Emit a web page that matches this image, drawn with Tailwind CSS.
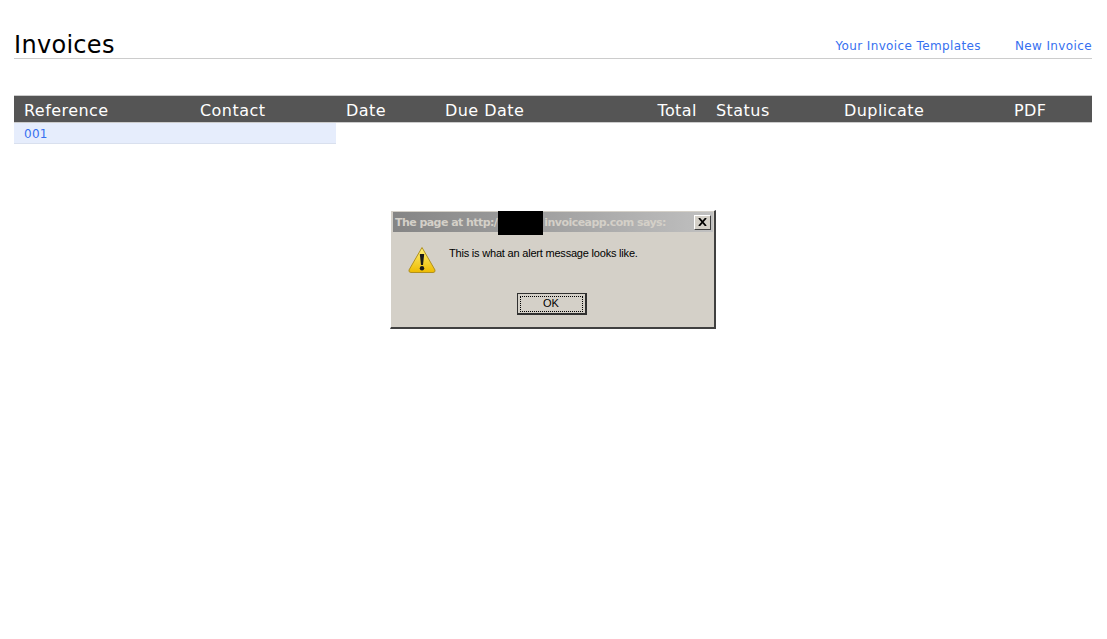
<!DOCTYPE html>
<html lang="en">
  <head>
    <meta charset="UTF-8" />
    <title>Invoices</title>
    <script src="https://cdn.jsdelivr.net/npm/@tailwindcss/browser@4"></script>
  </head>
  <body class="relative bg-white h-[639px] overflow-hidden font-['DejaVu_Sans',sans-serif]">
    <div class="pl-[14px] pr-[15px] pt-[29px]">
      <!-- Page heading -->
      <header class="flex items-end justify-between h-[30px] border-b border-[#cccccc]">
        <h1 class="text-[24px] leading-[30px] tracking-[0.3px] text-black translate-y-[2px]">Invoices</h1>
        <nav class="flex gap-[34px] text-[12px] leading-[24px] tracking-[0.38px] text-[#3670f0]">
          <a href="#">Your Invoice Templates</a>
          <a href="#">New Invoice</a>
        </nav>
      </header>

      <!-- Invoice table -->
      <div class="mt-[36px] flex h-[28px] items-center bg-[#555555] border-y border-[#cccccc] pt-[3px] text-[16px] tracking-[0.45px] text-white">
        <div class="w-[176px] pl-[10px]">Reference</div>
        <div class="w-[146px] pl-[10px]">Contact</div>
        <div class="w-[99px] pl-[10px]">Date</div>
        <div class="w-[170px] pl-[10px]">Due Date</div>
        <div class="w-[92px] text-right">Total</div>
        <div class="w-[137px] pl-[19px]">Status</div>
        <div class="w-[170px] pl-[10px]">Duplicate</div>
        <div class="pl-[10px]">PDF</div>
      </div>
      <div class="w-[322px] h-[21px] bg-[#e6edfc] border-b border-[#d9e0ee] pl-[10px] text-[12px] leading-[22px] tracking-[0.3px] text-[#3670f0]">
        <a href="#">001</a>
      </div>
    </div>

    <!-- Alert dialog -->
    <div class="absolute left-[390px] top-[210px] w-[326px] h-[119px] bg-[#d4d0c8] border-t border-l border-white border-r-2 border-b-2 border-r-[#404040] border-b-[#404040] font-['Liberation_Sans',sans-serif]">
      <div class="ml-[2px] mr-[1px] mt-[1px] h-[20px] flex items-center justify-between pl-[2px] pr-[2px] bg-gradient-to-r from-[#858585] to-[#c0c0c0] text-[11px] font-bold text-[#d4d0c8]">
        <span class="pt-[2px] font-['DejaVu_Sans',sans-serif] tracking-[-0.55px]">The page at http:/<span class="inline-block w-[47px]"></span>invoiceapp.com says:</span>
        <span class="flex h-[15px] w-[17px] items-center justify-center bg-[#d4d0c8] border border-t-white border-l-white border-r-[#404040] border-b-[#404040]">
          <svg width="9" height="8" viewBox="0 0 9 8"><path d="M1 0 L8 8 M8 0 L1 8" stroke="#000" stroke-width="1.8" /></svg>
        </span>
      </div>
      <!-- Redacted part of the address -->
      <div class="absolute left-[107px] top-0 h-[24px] w-[45px] bg-black"></div>
      <div class="flex pl-[16px] pt-[14px]">
        <svg width="30" height="28" viewBox="0 0 30 28" class="shrink-0">
          <defs>
            <linearGradient id="warn" x1="0" y1="0" x2="0" y2="1">
              <stop offset="0" stop-color="#fff27a" />
              <stop offset="1" stop-color="#eebb00" />
            </linearGradient>
          </defs>
          <path d="M15 1.5 L28 24 Q28.5 26.5 26 26.5 L4 26.5 Q1.5 26.5 2 24 Z" fill="url(#warn)" stroke="#b09020" stroke-linejoin="round" />
          <path d="M12.8 8 L17.2 8 L16 19 L14 19 Z" fill="#1a1a1a" />
          <circle cx="15" cy="22.2" r="2.2" fill="#1a1a1a" />
        </svg>
        <p class="ml-[12px] text-[11px] leading-[14px] tracking-[-0.2px] text-black">This is what an alert message looks like.</p>
      </div>
      <div class="mt-[19px] flex justify-center pr-[2px]">
        <button class="h-[22px] w-[70px] bg-[#d4d0c8] border border-[#303030] border-r-2 border-b-2 text-[11px] text-black">
          <span class="mx-[2px] flex h-[16px] items-center justify-center border border-dotted border-black">OK</span>
        </button>
      </div>
    </div>
  </body>
</html>
